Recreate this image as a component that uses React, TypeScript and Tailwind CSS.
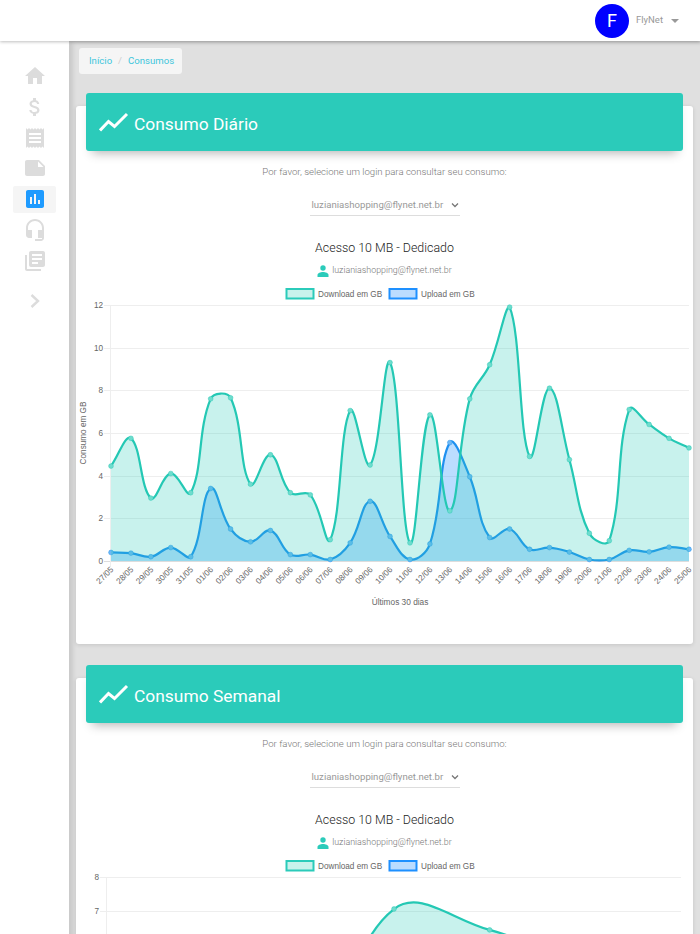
import { ReactNode } from 'react';

type Pt = { x: number; y: number };

const DAILY_LABELS = [
  '27/05', '28/05', '29/05', '30/05', '31/05', '01/06', '02/06', '03/06', '04/06', '05/06',
  '06/06', '07/06', '08/06', '09/06', '10/06', '11/06', '12/06', '13/06', '14/06', '15/06',
  '16/06', '17/06', '18/06', '19/06', '20/06', '21/06', '22/06', '23/06', '24/06', '25/06',
];
const DAILY_DOWN = [
  4.45, 5.75, 2.95, 4.1, 3.2, 7.6, 7.65, 3.6, 4.98, 3.2, 3.1, 1.0, 7.05, 4.5, 9.3, 0.85, 6.85, 2.35, 7.6, 9.2,
  11.9, 4.9, 8.1, 4.75, 1.3, 0.95, 7.1, 6.4, 5.75, 5.3,
];
const DAILY_UP = [
  0.4, 0.37, 0.2, 0.63, 0.2, 3.4, 1.5, 0.9, 1.43, 0.3, 0.3, 0.07, 0.85, 2.8, 1.15, 0.07, 0.8, 5.55, 3.95, 1.1,
  1.5, 0.55, 0.63, 0.42, 0.07, 0.07, 0.5, 0.43, 0.65, 0.55,
];

const WEEKLY_LABELS = ['S1', 'S2', 'S3', 'S4', 'S5', 'S6', 'S7'];
const WEEKLY_DOWN = [3.2, 2.5, 2.0, 7.05, 6.43, 5.5, 5.2];
const WEEKLY_UP = [0.4, 0.3, 0.5, 1.2, 1.1, 0.8, 0.6];

const TEAL = '#24c8b4';
const BLUE = '#1e90f0';

// same curve as chart.js with tension 0.4
function smoothPath(pts: Pt[], top: number, bottom: number) {
  const cap = (v: number) => Math.min(bottom, Math.max(top, v));
  const cps = pts.map((p, i) => {
    const prev = pts[Math.max(i - 1, 0)];
    const next = pts[Math.min(i + 1, pts.length - 1)];
    const d01 = Math.hypot(p.x - prev.x, p.y - prev.y);
    const d12 = Math.hypot(next.x - p.x, next.y - p.y);
    const s01 = d01 / (d01 + d12 || 1);
    const s12 = d12 / (d01 + d12 || 1);
    return {
      inX: p.x - 0.4 * s01 * (next.x - prev.x),
      inY: cap(p.y - 0.4 * s01 * (next.y - prev.y)),
      outX: p.x + 0.4 * s12 * (next.x - prev.x),
      outY: cap(p.y + 0.4 * s12 * (next.y - prev.y)),
    };
  });
  let d = `M${pts[0].x} ${pts[0].y}`;
  for (let i = 1; i < pts.length; i++) {
    d += `C${cps[i - 1].outX} ${cps[i - 1].outY} ${cps[i].inX} ${cps[i].inY} ${pts[i].x} ${pts[i].y}`;
  }
  return d;
}

function Series({ pts, top, bottom, color, fill, dot }: { pts: Pt[]; top: number; bottom: number; color: string; fill: string; dot: string }) {
  const line = smoothPath(pts, top, bottom);
  const last = pts[pts.length - 1];
  return (
    <g>
      <path d={`${line}L${last.x} ${bottom}L${pts[0].x} ${bottom}Z`} fill={fill} />
      <path d={line} fill="none" stroke={color} strokeWidth="2.2" />
      {pts.map((p, i) => (
        <circle key={i} cx={p.x} cy={p.y} r="2.4" fill={dot} stroke={color} strokeOpacity="0.45" strokeWidth="1" />
      ))}
    </g>
  );
}

function Chart({
  labels, down, up, max, step, left, right, top, bottom, height, xTitle,
}: {
  labels: string[]; down: number[]; up: number[]; max: number; step: number;
  left: number; right: number; top: number; bottom: number; height: number; xTitle: string;
}) {
  const xAt = (i: number) => left + ((right - left) * i) / (labels.length - 1);
  const yAt = (v: number) => bottom - ((bottom - top) * v) / max;
  const ticks: number[] = [];
  for (let v = 0; v <= max; v += step) ticks.push(v);
  const downPts = down.map((v, i) => ({ x: xAt(i), y: yAt(v) }));
  const upPts = up.map((v, i) => ({ x: xAt(i), y: yAt(v) }));

  return (
    <svg width="617" height={height} className="block font-['Liberation_Sans',Arial,sans-serif] text-left">
      <rect x="210.5" y="4" width="27" height="9.5" fill="#c9f2ec" stroke="#2bcbba" strokeWidth="2" />
      <text x="242" y="12" fontSize="8.2" fill="#666">Download em GB</text>
      <rect x="313.5" y="4" width="27" height="9.5" fill="#bbdcff" stroke="#1e90ff" strokeWidth="2" />
      <text x="345" y="12" fontSize="8.2" fill="#666">Upload em GB</text>

      {ticks.map((v) => (
        <g key={v}>
          <line x1={left - 7} x2={right} y1={Math.round(yAt(v)) + 0.5} y2={Math.round(yAt(v)) + 0.5} stroke={v === 0 ? '#dddddd' : '#eeeeee'} />
          <text x={left - 8} y={yAt(v) + 3} fontSize="8.2" textAnchor="end" fill="#666">{v}</text>
        </g>
      ))}
      <line x1={left - 0.5} x2={left - 0.5} y1={top} y2={bottom + 6} stroke="#eeeeee" />

      <Series pts={upPts} top={top} bottom={bottom} color={BLUE} fill="rgba(30,144,255,0.3)" dot="#6db8f5" />
      <Series pts={downPts} top={top} bottom={bottom} color={TEAL} fill="rgba(43,203,186,0.26)" dot="#6fdccd" />

      <text transform={`translate(10 ${(top + bottom) / 2}) rotate(-90)`} fontSize="8.2" textAnchor="middle" fill="#666">Consumo em GB</text>
      {labels.map((label, i) => (
        <text key={label} transform={`translate(${xAt(i) + 3} ${bottom + 9}) rotate(-45)`} fontSize="8.2" textAnchor="end" fill="#666">{label}</text>
      ))}
      <text x={(left + right) / 2} y={bottom + 44} fontSize="8.3" textAnchor="middle" fill="#666">{xTitle}</text>
    </svg>
  );
}

function TrendIcon() {
  return (
    <svg width="30" height="20" viewBox="0 0 30 20" fill="none" stroke="white" strokeWidth="3">
      <path d="M1 18.5 L9.5 9.5 L15.5 14.5 L28 2" />
    </svg>
  );
}

function ConsumptionCard({ title, children }: { title: string; children: ReactNode }) {
  return (
    <section className="bg-white rounded-[3px] mr-[7px] ml-[7px] shadow-[0_1px_4px_rgba(0,0,0,0.12)] text-center">
      <div className="relative -top-[13px] -mb-[13px] mx-[10px] h-[58px] bg-[#2bcbba] rounded-[3px] shadow-[0_8px_10px_-6px_rgba(0,0,0,0.3)] flex items-center pl-[13px] gap-[5px] text-white">
        <TrendIcon />
        <h2 className="mt-[5px] text-[17.4px] leading-none">{title}</h2>
      </div>
      <p className="mt-[14px] text-[9.6px] leading-[14px] font-light text-[#777]">Por favor, selecione um login para consultar seu consumo:</p>
      <div className="mx-auto mt-[16px] w-[150px] h-[21px] border-b border-[#ddd] flex items-start justify-between pl-[2px] pr-[1px] text-[9.6px] leading-[20px] text-[#999]">
        <span>luzianiashopping@flynet.net.br</span>
        <svg width="8" height="20" viewBox="0 0 8 20" fill="none" stroke="#777" strokeWidth="1.3"><path d="M1 8.5 L4 11.5 L7 8.5" /></svg>
      </div>
      <h3 className="mt-[24px] text-[12.4px] leading-[16px] font-light text-[#222]">Acesso 10 MB - Dedicado</h3>
      <div className="mt-[8px] h-[14px] flex items-center justify-center gap-[3px] text-[8.9px] font-light text-[#777]">
        <svg width="12" height="12" viewBox="0 0 12 12" fill="#2bcbba"><circle cx="6" cy="3" r="2.7" /><path d="M0.5 12 V10 C0.5 8 3.5 7 6 7 C8.5 7 11.5 8 11.5 10 V12 Z" /></svg>
        <span>luzianiashopping@flynet.net.br</span>
      </div>
      {children}
    </section>
  );
}

const ICONS = [
  'M10 20v-6h4v6h5v-8h3L12 3 2 12h3v8z',
  'M11.8 10.9c-2.27-.59-3-1.2-3-2.15 0-1.09 1.01-1.85 2.7-1.85 1.78 0 2.44.85 2.5 2.1h2.21c-.07-1.72-1.12-3.3-3.21-3.81V3h-3v2.16c-1.94.42-3.5 1.68-3.5 3.61 0 2.31 1.91 3.46 4.7 4.13 2.5.6 3 1.48 3 2.41 0 .69-.49 1.79-2.7 1.79-2.06 0-2.87-.92-2.98-2.1h-2.2c.12 2.19 1.76 3.42 3.68 3.83V21h3v-2.15c1.95-.37 3.5-1.5 3.5-3.55 0-2.84-2.43-3.81-4.7-4.4z',
  'M18 17H6v-2h12v2zm0-4H6v-2h12v2zm0-4H6V7h12v2zM3 22l1.5-1.5L6 22l1.5-1.5L9 22l1.5-1.5L12 22l1.5-1.5L15 22l1.5-1.5L18 22l1.5-1.5L21 22V2l-1.5 1.5L18 2l-1.5 1.5L15 2l-1.5 1.5L12 2l-1.5 1.5L9 2 7.5 3.5 6 2 4.5 3.5 3 2v20z',
  'M22 10l-6-6H4c-1.1 0-2 .9-2 2v12.01c0 1.1.9 1.99 2 1.99l16-.01c1.1 0 2-.89 2-1.99v-8zm-7-4.5l5.5 5.5H15V5.5z',
  'M19 3H5c-1.1 0-2 .9-2 2v14c0 1.1.9 2 2 2h14c1.1 0 2-.9 2-2V5c0-1.1-.9-2-2-2zM9 17H7v-7h2v7zm4 0h-2V7h2v10zm4 0h-2v-4h2v4z',
  'M12 1c-4.97 0-9 4.03-9 9v7c0 1.66 1.34 3 3 3h3v-8H5v-2c0-3.87 3.13-7 7-7s7 3.13 7 7v2h-4v8h4v1h-7v2h6c1.66 0 3-1.34 3-3V10c0-4.97-4.03-9-9-9z',
  'M4 6H2v14c0 1.1.9 2 2 2h14v-2H4V6zm16-4H8c-1.1 0-2 .9-2 2v12c0 1.1.9 2 2 2h12c1.1 0 2-.9 2-2V4c0-1.1-.9-2-2-2zm-1 9H9V9h10v2zm-4 4H9v-2h6v2zm4-8H9V5h10v2z',
];

function Sidebar() {
  return (
    <aside className="w-[69px] shrink-0 flex flex-col items-center pt-[21.5px] gap-[3.8px]">
      {ICONS.map((d, i) => (
        <div key={i} className={`w-[43px] h-[27px] flex items-center justify-center rounded-[2px] ${i === 4 ? 'bg-[#f5f5f5]' : ''}`}>
          <svg width="24" height="24" viewBox="0 0 24 24" fill={i === 4 ? '#1e9bff' : '#dcdcdc'}>
            <path d={d} />
          </svg>
        </div>
      ))}
      <svg className="mt-[11px]" width="24" height="24" viewBox="0 0 24 24" fill="none" stroke="#dcdcdc" strokeWidth="2.4">
        <path d="M8.5 6 L15 12 L8.5 18" />
      </svg>
    </aside>
  );
}

export default function App() {
  return (
    <div className="w-[700px] h-[934px] overflow-hidden bg-white flex flex-col font-['Roboto',sans-serif]">
      <header className="relative z-10 h-[41px] shrink-0 bg-white shadow-[0_1px_3px_rgba(0,0,0,0.25)] flex items-center justify-end pr-[21px]">
        <div className="w-[34px] h-[34px] rounded-full bg-[#0000ff] text-white text-[18px] flex items-center justify-center">F</div>
        <span className="ml-[7px] text-[9.5px] text-[#999]">FlyNet</span>
        <span className="ml-[8px] border-x-[4.5px] border-x-transparent border-t-[4.5px] border-t-[#999]" />
      </header>
      <div className="flex flex-1 min-h-0">
        <Sidebar />
        <main className="flex-1 min-w-0 bg-[#e0e0e0] shadow-[inset_5px_3px_4px_-1px_rgba(0,0,0,0.1)]">
          <nav className="ml-[10px] mt-[7px] w-[103px] h-[26px] bg-[#f5f5f5] rounded-[3px] flex items-center pl-[10px] text-[9.6px] text-[#3ec6dc]">
            <span>Início</span>
            <span className="mx-[6px] text-[#ccc]">/</span>
            <span>Consumos</span>
          </nav>
          <div className="mt-[32px] flex flex-col gap-[34px]">
            <ConsumptionCard title="Consumo Diário">
              <div className="mt-[7px] pb-[34px]">
                <Chart labels={DAILY_LABELS} down={DAILY_DOWN} up={DAILY_UP} max={12} step={2} left={35} right={613} top={20} bottom={276} height={325} xTitle="Últimos 30 dias" />
              </div>
            </ConsumptionCard>
            <ConsumptionCard title="Consumo Semanal">
              <div className="mt-[7px] pb-[34px]">
                <Chart labels={WEEKLY_LABELS} down={WEEKLY_DOWN} up={WEEKLY_UP} max={8} step={1} left={31} right={605} top={20} bottom={289.6} height={340} xTitle="Últimas semanas" />
              </div>
            </ConsumptionCard>
          </div>
        </main>
      </div>
    </div>
  );
}
